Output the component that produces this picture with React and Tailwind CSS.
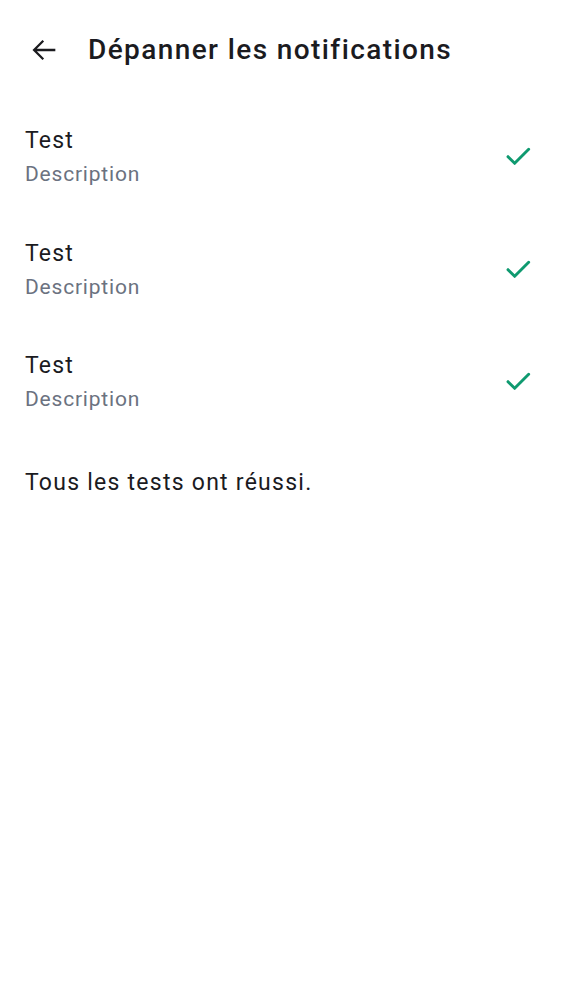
import React from "react";

const Check = () => (
  <svg width="32" height="32" viewBox="0 0 24 24" fill="none" stroke="#0f9a70" strokeWidth="2.2" strokeLinecap="round" strokeLinejoin="round">
    <path d="M4.5 12.5l5 5L20 7" />
  </svg>
);

export default function App() {
  const rows = [1, 2, 3];
  return (
    <div className="w-[562px] h-[1000px] bg-white text-[#1b1b1f]" style={{ fontFamily: "Roboto, sans-serif" }}>
      <div className="h-[100px] flex items-center pl-[27px]">
        <svg width="34" height="34" viewBox="0 0 24 24" fill="none" stroke="#1b1b1f" strokeWidth="1.6" strokeLinecap="butt">
          <path d="M20 12H5M11.5 5.5L5 12l6.5 6.5" />
        </svg>
        <span className="ml-[27px] text-[28px] font-medium tracking-[1.4px]">Dépanner les notifications</span>
      </div>
      {rows.map((r) => (
        <div key={r} className="h-[112.5px] flex items-center justify-between pl-[25px] pr-[28px]">
          <div className="flex flex-col pt-[2px]">
            <span className="text-[23px] leading-[32px] tracking-[1.2px]">Test</span>
            <span className="mt-[2px] text-[21px] leading-[30px] tracking-[0.8px] text-[#6b7280]">Description</span>
          </div>
          <Check />
        </div>
      ))}
      <div className="pl-[25px] pt-[29px] text-[23px] leading-[32px] tracking-[1.25px]">Tous les tests ont réussi.</div>
    </div>
  );
}
